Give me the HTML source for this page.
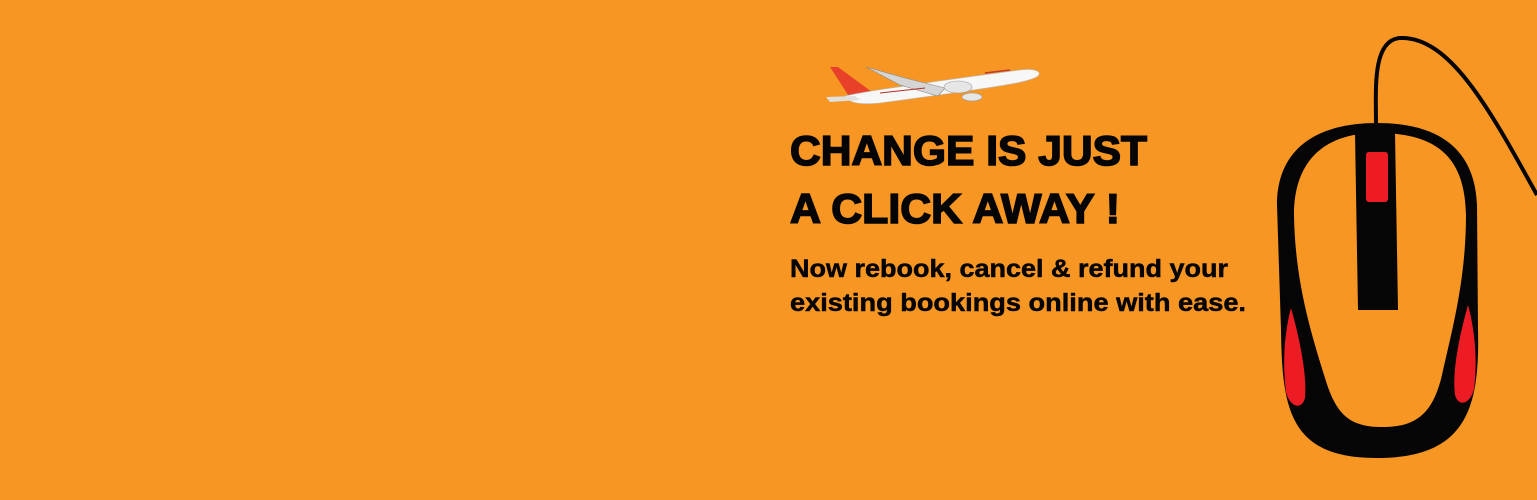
<!DOCTYPE html>
<html><head><meta charset="utf-8"><style>
html,body{margin:0;padding:0;}
body{width:1537px;height:500px;background:#f79622;overflow:hidden;position:relative;}
svg{position:absolute;left:0;top:0;}
</style></head><body>
<svg width="1537" height="500" viewBox="0 0 1537 500">
<g font-family="Liberation Sans, sans-serif" font-weight="bold" fill="#050505" stroke="#050505">
<text x="790" y="165" font-size="42" stroke-width="1.6" textLength="357" lengthAdjust="spacingAndGlyphs">CHANGE IS JUST</text>
<text x="790" y="223" font-size="42" stroke-width="1.6" textLength="330" lengthAdjust="spacingAndGlyphs">A CLICK AWAY !</text>
<text x="790" y="277" font-size="25" stroke-width="0.5" textLength="438" lengthAdjust="spacingAndGlyphs">Now rebook, cancel &amp; refund your</text>
<text x="790" y="311" font-size="25" stroke-width="0.5" textLength="456" lengthAdjust="spacingAndGlyphs">existing bookings online with ease.</text>
</g>
<!-- plane -->
<g>
<path d="M830,67 L838,67 L872,92 L866,100 L852,101 Z" fill="#e8412a"/>
<path d="M845,96 C870,90 960,78 1020,70 C1036,68 1042,72 1038,76 C1030,82 1000,86 960,92 L880,103 C860,105 848,103 845,96 Z" fill="#f7f7f7" stroke="#bbb" stroke-width="0.6"/>
<path d="M866,67 L905,78 L945,88 L938,96 L900,85 Z" fill="#d5d5d5" stroke="#888" stroke-width="0.6"/>
<path d="M826,97 L855,96 L860,100 L830,102 Z" fill="#e0e0e0"/>
<ellipse cx="958" cy="87" rx="14" ry="6" fill="#e6e6e6" stroke="#999" stroke-width="0.6"/>
<ellipse cx="972" cy="97" rx="10" ry="4" fill="#e6e6e6" stroke="#999" stroke-width="0.6"/>
<path d="M985,73 L1010,70" stroke="#c0392b" stroke-width="1.5"/>
<path d="M880,93 L925,88" stroke="#b03020" stroke-width="1"/>
</g>
<!-- mouse -->
<path d="M1376,123 C1376,90 1372,40 1400,38 C1450,36 1490,110 1537,195" fill="none" stroke="#050505" stroke-width="4"/>
<path d="M1377,123 C1440,123 1475,150 1477,205 L1478,330 C1480,410 1465,458 1377,458 C1290,458 1282,410 1281,330 L1277,205 C1277,150 1315,123 1377,123 Z" fill="#050505"/>
<path d="M1377,133 C1440,133 1465,160 1466,215 C1466,280 1452,330 1442,375 C1432,418 1412,427 1382,427 C1350,427 1336,415 1325,378 C1310,330 1295,280 1294,215 C1294,165 1320,133 1377,133 Z" fill="#f79622"/>
<path d="M1355,133 L1395,133 L1398,310 L1358,310 Z" fill="#050505"/>
<rect x="1366" y="152" width="22" height="50" rx="3" fill="#ed1c24"/>
<path d="M1291,308 C1300,340 1307,375 1305,398 C1302,410 1290,408 1286,392 C1282,360 1285,330 1291,308 Z" fill="#ed1c24"/>
<path d="M1468,305 C1459,337 1452,372 1455,395 C1458,407 1470,405 1474,389 C1478,357 1474,327 1468,305 Z" fill="#ed1c24"/>
</svg>
</body></html>
